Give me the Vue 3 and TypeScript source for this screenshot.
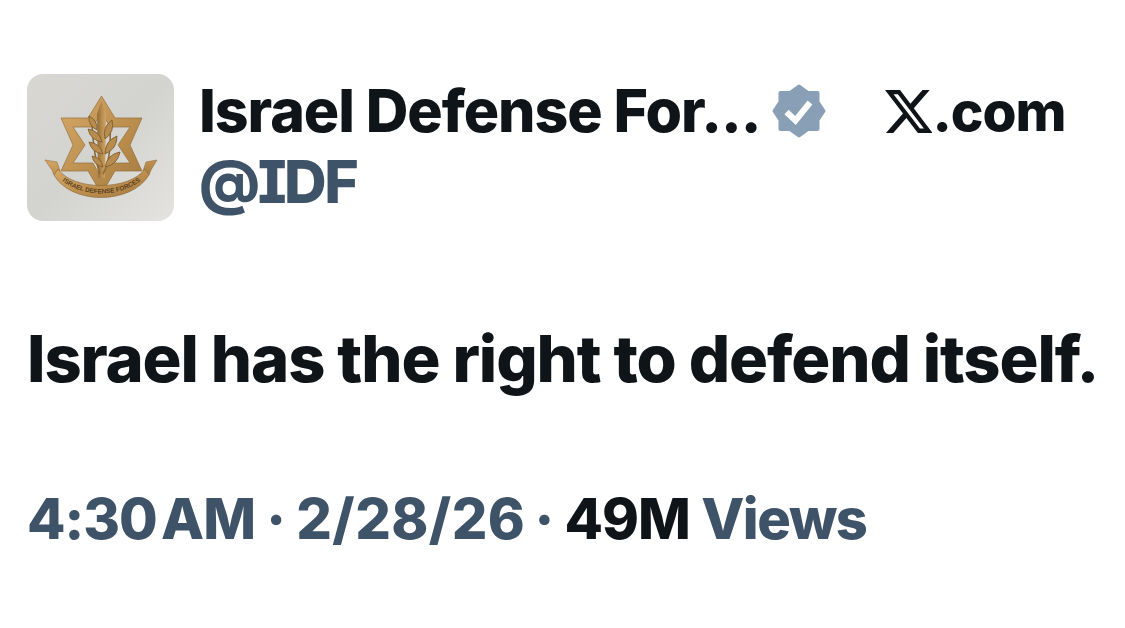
<script setup lang="ts">
const time: string = '4:30 AM'
const date: string = '2/28/26'

type Leaf = [number, number, number, number]
const leaves: Leaf[] = [
  [70, 56, 62, 42],
  [75, 68, 61, 55],
  [76, 80, 62, 68],
  [76, 93, 65, 82],
  [78, 65, 85, 46],
  [78, 80, 90, 62],
  [78, 93, 93, 78],
]
const leafPath = ([x1, y1, x2, y2]: Leaf): string => {
  const mx = (x1 + x2) / 2
  const my = (y1 + y2) / 2
  const nx = (y2 - y1) * 0.34
  const ny = (x1 - x2) * 0.34
  return `M${x1} ${y1} Q${mx + nx} ${my + ny} ${x2} ${y2} Q${mx - nx} ${my - ny} ${x1} ${y1} Z`
}
</script>

<template>
  <main class="tweet">
    <header class="head">
      <div class="avatar">
        <svg viewBox="0 0 147 147" width="147" height="147" aria-label="IDF emblem">
          <defs>
            <linearGradient id="bg" x1="0" y1="0" x2="1" y2="1">
              <stop offset="0" stop-color="#d8d7d2" />
              <stop offset="0.5" stop-color="#d3d3d0" />
              <stop offset="1" stop-color="#e4e3df" />
            </linearGradient>
            <linearGradient id="gold" x1="0" y1="0" x2="1" y2="1">
              <stop offset="0" stop-color="#d6a968" />
              <stop offset="0.5" stop-color="#bf9150" />
              <stop offset="1" stop-color="#a47a40" />
            </linearGradient>
            <linearGradient id="blade" x1="0" y1="0" x2="1" y2="0">
              <stop offset="0" stop-color="#8f6a38" />
              <stop offset="0.5" stop-color="#b58a4c" />
              <stop offset="1" stop-color="#d2a566" />
            </linearGradient>
          </defs>
          <rect width="147" height="147" fill="url(#bg)" />
          <path fill="url(#gold)" stroke="#94703c" stroke-width="0.7" fill-rule="evenodd" d="M74.5 22 L88 44 L115 44 L103 71 L115 97 L88 97 L74.5 120 L61 97 L34 97 L46 71 L34 44 L61 44 Z M74.5 38 L83 53 L103 53 L91 71 L103 89 L83 89 L74.5 104 L66 89 L46 89 L58 71 L46 53 L66 53 Z" />
          <path fill="url(#blade)" d="M70 40 L74.5 27 L79 40 L78 104 L71 104 Z" />
          <path fill="none" stroke="#8f6a38" stroke-width="1.6" d="M73 100 C68 86 66 70 65 50 M76 100 C82 90 84 72 83 52" />
          <path v-for="(leaf, i) in leaves" :key="i" :d="leafPath(leaf)" fill="#b88c4d" stroke="#7f5d30" stroke-width="0.9" />
          <path fill="url(#gold)" stroke="#94703c" stroke-width="0.6" d="M18 86 L30 88 L33 97 L27 101 L25 96 Z M130 86 L119 88 L116 97 L122 101 L124 96 Z" />
          <path fill="url(#gold)" stroke="#8a6636" stroke-width="0.6" d="M31 95 C46 117 102 117 118 95 L122 101 C104 131 44 131 27 101 Z" />
          <path id="arc" fill="none" d="M24 94 C44 128 104 128 125 94" />
          <text class="band" fill="#5a4020">
            <textPath href="#arc" startOffset="50%" text-anchor="middle">ISRAEL DEFENSE FORCES</textPath>
          </text>
        </svg>
      </div>
      <div class="who">
        <div class="line">
          <span class="name">Israel Defense For...</span>
          <svg class="badge" viewBox="0 0 54 54" width="54" height="54" aria-label="Verified">
            <path fill="#889fb6" stroke="#889fb6" stroke-width="4" stroke-linejoin="round" d="M27 2.5 L36 9 L45.5 9 L45.5 18 L51.5 27 L45.5 36 L45.5 45 L36 45 L27 51.5 L18 45 L8.5 45 L8.5 36 L2.5 27 L8.5 18 L8.5 9 L18 9 Z" />
            <path fill="none" stroke="#fff" stroke-width="6" d="M14.5 28 L23.5 36.5 L38 18.5" />
          </svg>
          <span class="site">
            <svg class="xlogo" viewBox="1.25 2.25 21.33 19.5" width="47" height="43" aria-label="X">
              <path fill="#0f1419" d="M18.244 2.25h3.308l-7.227 8.26 8.502 11.24H16.17l-5.214-6.817L4.99 21.75H1.68l7.73-8.835L1.254 2.25H8.08l4.713 6.231zm-1.161 17.52h1.833L7.084 4.126H5.117z" />
            </svg>.com
          </span>
        </div>
        <div class="handle">@IDF</div>
      </div>
    </header>
    <p class="body">Israel has the right to defend itself.</p>
    <p class="meta"><span class="time">{{ time }}</span> · <span class="date">{{ date }}</span> · <span class="count">49M</span> <span class="views">Views</span></p>
  </main>
</template>

<style>
html, body { background: #fff; }
</style>

<style scoped>
.tweet {
  width: 1125px;
  height: 628px;
  box-sizing: border-box;
  padding: 74px 0 0 27px;
  background: #fff;
  font-family: Inter, "Liberation Sans", sans-serif;
  font-weight: 800;
  color: #0f1419;
  overflow: hidden;
}
.head { display: flex; gap: 25px; }
.avatar {
  width: 147px;
  height: 147px;
  border-radius: 16px;
  overflow: hidden;
  flex: none;
}
.avatar svg { display: block; }
.band { font-family: "Liberation Sans", sans-serif; font-size: 6.4px; font-weight: 700; }
.who { display: flex; flex-direction: column; padding-top: 7px; }
.line { display: flex; align-items: center; height: 60px; }
.name { font-size: 59px; letter-spacing: -1.05px; line-height: 60px; white-space: nowrap; }
.badge { margin-left: 12px; flex: none; }
.site {
  display: flex;
  align-items: center;
  margin-left: 59px;
  font-size: 55px;
  letter-spacing: -1px;
  line-height: 60px;
}
.xlogo { flex: none; }
.handle {
  font-size: 59px;
  letter-spacing: -2.5px;
  line-height: 60px;
  color: #3f5368;
  margin-top: 11px;
  font-feature-settings: "ss02", "cv08";
}
.body {
  margin: 103px 0 0;
  font-size: 65px;
  line-height: 70px;
  letter-spacing: -1.13px;
  white-space: nowrap;
}
.meta {
  margin: 95px 0 0;
  font-size: 56px;
  line-height: 60px;
  letter-spacing: -1px;
  color: #3f5368;
  white-space: pre;
}
.time { word-spacing: -7px; }
.date { letter-spacing: 0.4px; margin-right: -2px; }
.count { color: #0f1419; }
.views { letter-spacing: -1.4px; }
</style>
